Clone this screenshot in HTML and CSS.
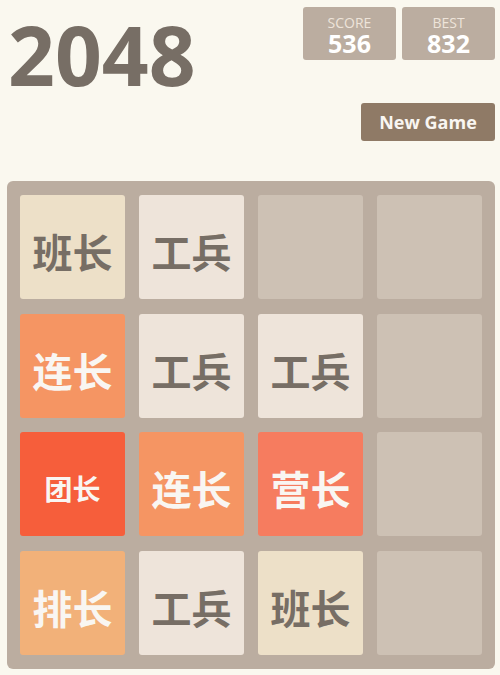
FILE: index.html
```html
<!DOCTYPE html>
<html lang="zh">
<head>
  <meta charset="UTF-8">
  <meta name="viewport" content="width=device-width, initial-scale=1.0">
  <title>2048 军衔版</title>
  <link rel="stylesheet" href="styles.css">
</head>
<body>
  <div class="container">
    <div class="heading">
      <h1 class="title">2048</h1>
      <div class="side">
        <div class="scores">
          <div class="score-box">
            <div class="score-label">SCORE</div>
            <div class="score-value">536</div>
          </div>
          <div class="score-box">
            <div class="score-label">BEST</div>
            <div class="score-value">832</div>
          </div>
        </div>
        <button class="restart">New Game</button>
      </div>
    </div>

    <div class="board">
      <div class="tile tile-4">班长</div>
      <div class="tile tile-2">工兵</div>
      <div class="tile"></div>
      <div class="tile"></div>

      <div class="tile tile-16">连长</div>
      <div class="tile tile-2">工兵</div>
      <div class="tile tile-2">工兵</div>
      <div class="tile"></div>

      <div class="tile tile-64">团长</div>
      <div class="tile tile-16">连长</div>
      <div class="tile tile-32">营长</div>
      <div class="tile"></div>

      <div class="tile tile-8">排长</div>
      <div class="tile tile-2">工兵</div>
      <div class="tile tile-4">班长</div>
      <div class="tile"></div>
    </div>
  </div>
</body>
</html>
```

FILE: styles.css
```css
body {
  margin: 0;
  background-color: #faf8ef;
  color: #776e65;
  font-family: 'Open Sans', 'Noto Sans CJK SC', sans-serif;
}
.container {
  width: 488px;
  margin-left: 7px;
  padding-top: 7px;
}
.heading {
  display: flex;
  justify-content: space-between;
  align-items: flex-start;
}
.title {
  margin: 0 0 0 1px;
  padding-top: 7px;
  font-size: 82px;
  font-weight: 700;
  line-height: 80px;
}
.side {
  display: flex;
  flex-direction: column;
  align-items: flex-end;
}
.scores {
  display: flex;
  gap: 6px;
}
.score-box {
  width: 93px;
  height: 53px;
  box-sizing: border-box;
  padding-top: 8px;
  background-color: #bbada0;
  border-radius: 3px;
  text-align: center;
}
.score-label {
  font-size: 14px;
  color: #eee4da;
  line-height: 16px;
}
.score-value {
  font-size: 25px;
  font-weight: 700;
  color: #fff;
  line-height: 25px;
}
.restart {
  margin-top: 43px;
  width: 134px;
  height: 38px;
  border: none;
  border-radius: 3px;
  background-color: #8f7a66;
  color: #f9f6f2;
  font-family: 'Open Sans', sans-serif;
  font-size: 18px;
  font-weight: 700;
  cursor: pointer;
}
.board {
  margin-top: 40px;
  width: 488px;
  height: 488px;
  box-sizing: border-box;
  padding: 14px 13px;
  background-color: #bbada0;
  border-radius: 6px;
  display: grid;
  grid-template-columns: repeat(4, 105px);
  grid-template-rows: repeat(4, 104px);
  column-gap: 14px;
  row-gap: 14.5px;
}
.tile {
  border-radius: 3px;
  background-color: #cdc1b4;
  display: flex;
  align-items: center;
  justify-content: center;
  font-family: 'Noto Sans CJK SC', sans-serif;
  font-weight: 700;
  font-size: 40px;
  padding-top: 8px;
  box-sizing: border-box;
}
.tile-2 { background-color: #eee4da; }
.tile-4 { background-color: #ede0c8; }
.tile-8 { background-color: #f2b179; color: #f9f6f2; }
.tile-16 { background-color: #f59563; color: #f9f6f2; }
.tile-32 { background-color: #f67c5f; color: #f9f6f2; }
.tile-64 { background-color: #f65e3b; color: #f9f6f2; font-size: 28px; }
```
